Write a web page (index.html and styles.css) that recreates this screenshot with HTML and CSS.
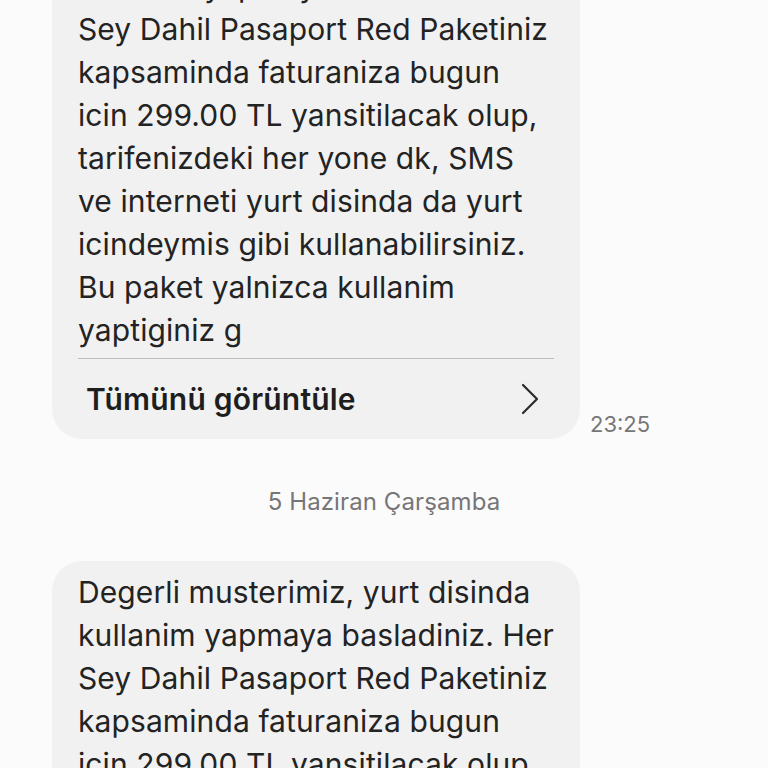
FILE: index.html
```html
<!DOCTYPE html>
<html lang="tr">
<head>
    <meta charset="UTF-8">
    <meta name="viewport" content="width=device-width, initial-scale=1.0">
    <title>Mesajlar</title>
    <link rel="stylesheet" href="styles.css">
</head>
<body>
    <div class="thread">
        <!-- earlier message, scrolled partly out of view -->
        <div class="msg-row first">
            <div class="bubble">
                <p class="msg-text">Degerli musterimiz, yurt disinda<br>kullanim yapmaya basladiniz. Her<br>Sey Dahil Pasaport Red Paketiniz<br>kapsaminda faturaniza bugun<br>icin 299.00 TL yansitilacak olup,<br>tarifenizdeki her yone dk, SMS<br>ve interneti yurt disinda da yurt<br>icindeymis gibi kullanabilirsiniz.<br>Bu paket yalnizca kullanim<br>yaptiginiz g</p>
                <div class="view-all">
                    <span>Tümünü görüntüle</span>
                    <svg class="chevron" width="20" height="32" viewBox="0 0 20 32">
                        <path d="M3 2 L17 16 L3 30" fill="none" stroke="#2b2b2b" stroke-width="2.2" stroke-linecap="round" stroke-linejoin="round"/>
                    </svg>
                </div>
            </div>
            <span class="msg-time">23:25</span>
        </div>

        <div class="date-sep">5 Haziran Çarşamba</div>

        <div class="msg-row">
            <div class="bubble">
                <p class="msg-text">Degerli musterimiz, yurt disinda<br>kullanim yapmaya basladiniz. Her<br>Sey Dahil Pasaport Red Paketiniz<br>kapsaminda faturaniza bugun<br>icin 299.00 TL yansitilacak olup,<br>tarifenizdeki her yone dk, SMS<br>ve interneti yurt disinda da yurt<br>icindeymis gibi kullanabilirsiniz.<br>Bu paket yalnizca kullanim<br>yaptiginiz g</p>
                <div class="view-all">
                    <span>Tümünü görüntüle</span>
                    <svg class="chevron" width="20" height="32" viewBox="0 0 20 32">
                        <path d="M3 2 L17 16 L3 30" fill="none" stroke="#2b2b2b" stroke-width="2.2" stroke-linecap="round" stroke-linejoin="round"/>
                    </svg>
                </div>
            </div>
        </div>
    </div>
</body>
</html>
```

FILE: styles.css
```css
body {
    font-family: Inter, Roboto, sans-serif;
    background-color: #fbfbfc;
    margin: 0;
    color: #232323;
    overflow: hidden;
}
.thread {
    padding: 0 52px;
}
.msg-row {
    display: flex;
    align-items: flex-end;
    gap: 10px;
}
.msg-row.first {
    margin-top: -88px;
}
.bubble {
    width: 528px;
    flex-shrink: 0;
    box-sizing: border-box;
    background-color: #f1f1f1;
    border-radius: 30px;
    padding: 10px 26px 0 26px;
}
.msg-text {
    margin: 0;
    font-size: 30px;
    letter-spacing: 0.1px;
    line-height: 43px;
    white-space: nowrap;
    padding-bottom: 6px;
    border-bottom: 1px solid #bdbdbd;
}
.view-all {
    display: flex;
    align-items: center;
    justify-content: space-between;
    height: 80px;
    padding: 0 14px 0 8px;
    font-size: 30px;
    letter-spacing: 0.2px;
    font-weight: 600;
    color: #1e1e1e;
}
.chevron {
    display: block;
}
.msg-time {
    font-size: 22px;
    color: #777;
    padding-bottom: 2px;
}
.date-sep {
    text-align: center;
    font-size: 24px;
    letter-spacing: 0.1px;
    line-height: 30px;
    color: #767676;
    margin: 48px 0 44px;
}
```
